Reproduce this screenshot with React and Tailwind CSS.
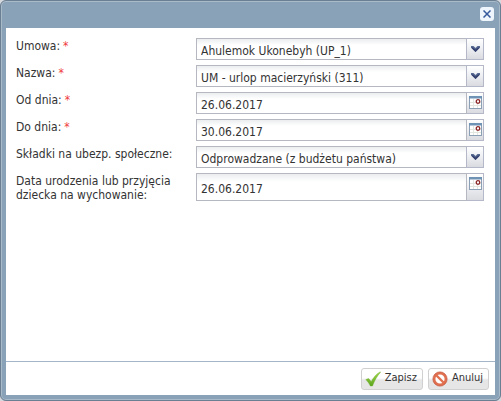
import { useState } from "react";

const fieldClass =
  "min-w-0 flex-1 appearance-none rounded-none border border-[#b5b8c0] bg-linear-to-b from-[#ebedef] to-white to-30% pl-1 pt-[3px] text-[#333] outline-none";
const triggerClass =
  "flex justify-center border-[#b5b8c8] bg-linear-to-b from-white via-[#eceef2] to-[#d9dbe0]";
const buttonClass =
  "flex h-[22px] items-center gap-1 rounded-[3px] border border-[#d0d0d0] bg-linear-to-b from-white from-45% to-[#e6e6e6] to-55% pl-[3px] pr-[5px] text-[11px] text-[#333]";

function ArrowIcon() {
  return (
    <svg width="9" height="6" viewBox="0 0 9 6" aria-hidden="true">
      <path d="M0 0h2.5l2 2 2-2H9v1.5L4.5 6 0 1.5z" fill="#566a92" />
      <path d="M0 1.5h2l2.5 2 2.5-2h2L4.5 6z" fill="#35406f" />
    </svg>
  );
}

function CalendarIcon() {
  return (
    <svg width="13" height="13" viewBox="0 0 13 13" aria-hidden="true">
      <rect x="0.5" y="0.5" width="12" height="12" fill="#fff" stroke="#8ba0b5" />
      <path d="M0 0h13v2.5H0z" fill="#6f93b5" />
      <path d="M4.5 3v9M8.5 3v9M1 6.5h11M1 9.5h11" stroke="#e4e6e0" />
      <circle cx="9" cy="5.5" r="1.8" fill="#fff" stroke="#8c2525" strokeWidth="1.3" />
    </svg>
  );
}

function CheckIcon() {
  return (
    <svg width="16" height="16" viewBox="0 0 16 16" aria-hidden="true">
      <defs>
        <linearGradient id="tick" x1="0" y1="0" x2="0" y2="1">
          <stop offset="0" stopColor="#a5d84e" />
          <stop offset="1" stopColor="#5aa51d" />
        </linearGradient>
      </defs>
      <path
        d="M.8 8.6 3.5 7.5c1.2 1 2 2 2.6 3.3C8 7 11 3 15.3.8l.3.4C12.5 4.5 9.5 9.5 7.5 15H5.3C4.2 12.5 2.6 10.4.8 8.6z"
        fill="url(#tick)"
        stroke="#6aae2c"
        strokeWidth="0.4"
      />
    </svg>
  );
}

function CancelIcon() {
  return (
    <svg width="16" height="16" viewBox="0 0 16 16" aria-hidden="true">
      <circle cx="8" cy="8" r="5.8" fill="#fff" stroke="#e0704f" strokeWidth="2.4" />
      <path d="m4 4 8 8" stroke="#e0704f" strokeWidth="2.4" />
      <circle cx="8" cy="8" r="7.1" fill="none" stroke="#c14a30" strokeWidth="0.7" />
    </svg>
  );
}

function Row({ id, label, required, tall, children }) {
  return (
    <div className="flex">
      <label htmlFor={id} className="w-[180px] shrink-0 pt-px leading-[14px]">
        {label}
        {required && <span className="ml-[3px] text-[#f03c3c]">*</span>}
      </label>
      <div className={`relative flex min-w-0 flex-1 ${tall ? "h-7" : "h-[22px]"}`}>
        {children}
      </div>
    </div>
  );
}

function SelectRow({ id, label, required, options }) {
  return (
    <Row id={id} label={label} required={required}>
      <select id={id} className={fieldClass}>
        {options.map((o) => (
          <option key={o}>{o}</option>
        ))}
      </select>
      <span
        className={`${triggerClass} pointer-events-none absolute inset-y-0 right-0 w-[18px] border pt-[7px]`}
      >
        <ArrowIcon />
      </span>
    </Row>
  );
}

function DateRow({ id, label, required, tall, value, onChange }) {
  return (
    <Row id={id} label={label} required={required} tall={tall}>
      <input
        id={id}
        type="text"
        value={value}
        onChange={(e) => onChange(e.target.value)}
        className={fieldClass}
      />
      <button
        type="button"
        aria-label="Wybierz datę"
        className={`${triggerClass} w-[17px] shrink-0 items-start border border-l-0 pt-[3px]`}
      >
        <CalendarIcon />
      </button>
    </Row>
  );
}

export default function App() {
  const [from, setFrom] = useState("26.06.2017");
  const [to, setTo] = useState("30.06.2017");
  const [birth, setBirth] = useState("26.06.2017");

  return (
    <div className="min-h-screen bg-[#d5d8dc] font-['DejaVu_Sans_Condensed','DejaVu_Sans',sans-serif] text-[12px] text-[#333]">
      <form
        onSubmit={(e) => e.preventDefault()}
        className="flex min-h-screen flex-col rounded-md border border-[#6b7f92] bg-[#8aa2b8] px-[5px] pb-[5px] shadow-[inset_0_0_0_1px_#a9bac9]"
      >
        <header className="flex h-[27px] shrink-0 items-center justify-end pb-0.5 pr-px">
          <button
            type="button"
            aria-label="Zamknij"
            className="flex size-[14px] items-center justify-center rounded-[3px] bg-[#eef5fc]"
          >
            <svg width="8" height="8" viewBox="0 0 8 8" aria-hidden="true">
              <path d="m.5.5 7 7m0-7-7 7" stroke="#36589c" strokeWidth="1.5" />
            </svg>
          </button>
        </header>

        <main className="flex flex-1 flex-col gap-[5px] bg-white pb-3 pl-[10px] pr-[11px] pt-[10px]">
          <SelectRow id="umowa" label="Umowa:" required options={["Ahulemok Ukonebyh (UP_1)"]} />
          <SelectRow id="nazwa" label="Nazwa:" required options={["UM - urlop macierzyński (311)"]} />
          <DateRow id="od" label="Od dnia:" required value={from} onChange={setFrom} />
          <DateRow id="do" label="Do dnia:" required value={to} onChange={setTo} />
          <SelectRow
            id="skladki"
            label="Składki na ubezp. społeczne:"
            options={["Odprowadzane (z budżetu państwa)"]}
          />
          <DateRow
            id="urodzenie"
            label="Data urodzenia lub przyjęcia dziecka na wychowanie:"
            tall
            value={birth}
            onChange={setBirth}
          />
        </main>

        <footer className="flex h-[34px] shrink-0 items-center justify-end gap-[5px] border-t border-[#a3b5c6] bg-white pr-[6px]">
          <button type="submit" className={buttonClass}>
            <CheckIcon />
            Zapisz
          </button>
          <button type="button" className={buttonClass}>
            <CancelIcon />
            Anuluj
          </button>
        </footer>
      </form>
    </div>
  );
}
